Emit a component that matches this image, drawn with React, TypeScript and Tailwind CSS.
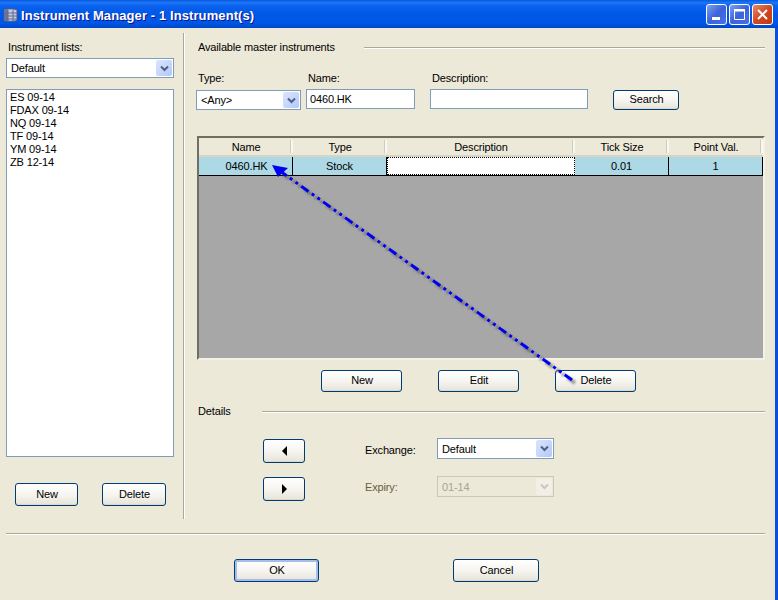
import type { ReactNode } from "react";

const instruments = ["ES 09-14", "FDAX 09-14", "NQ 09-14", "TF 09-14", "YM 09-14", "ZB 12-14"];

function Btn({ className, children, primary }: { className: string; children: ReactNode; primary?: boolean }) {
  return (
    <div
      className={`flex items-center justify-center rounded-[3px] border border-[#003c74] bg-gradient-to-b from-white via-[#f6f5f0] to-[#e6e3d8] pb-px pl-px text-[11px] tracking-[-0.15px] text-black ${
        primary ? "shadow-[inset_0_0_0_2px_#a4bdec]" : "shadow-[inset_0_-1px_0_#dcd7cb]"
      } ${className}`}
    >
      {children}
    </div>
  );
}

function Chevron({ color }: { color: string }) {
  return (
    <svg width="9" height="7" viewBox="0 0 9 7">
      <path d="M1 1.5 L4.5 5 L8 1.5" fill="none" stroke={color} strokeWidth="2" />
    </svg>
  );
}

function Select({ className, value, disabled }: { className: string; value: string; disabled?: boolean }) {
  return (
    <div
      className={`flex items-center justify-between border p-px ${
        disabled ? "border-[#c9c7ba] bg-[#ece9d8] text-[#a7a595]" : "border-[#7f9db9] bg-white text-black"
      } ${className}`}
    >
      <span className="pl-[3px] pt-px">{value}</span>
      <div
        className={`flex h-full w-[16px] items-center justify-center rounded-[2px] ${
          disabled ? "bg-[#f1efe6]" : "bg-gradient-to-br from-[#dbe5fd] to-[#b4c8f8]"
        }`}
      >
        <Chevron color={disabled ? "#c9c7ba" : "#4d6185"} />
      </div>
    </div>
  );
}

function Etched({ className }: { className: string }) {
  return <div className={`h-[2px] border-t border-b border-t-[#aca899] border-b-white ${className}`} />;
}

function WinBtn({ className, children }: { className: string; children: ReactNode }) {
  return (
    <div className={`flex h-[21px] w-[21px] items-center justify-center rounded-[3px] border border-white ${className}`}>
      <svg width="15" height="15" viewBox="0 0 15 15">
        {children}
      </svg>
    </div>
  );
}

const headers = [
  { label: "Name", w: "w-[94px]" },
  { label: "Type", w: "w-[94px]" },
  { label: "Description", w: "w-[188px]" },
  { label: "Tick Size", w: "w-[94px]" },
  { label: "Point Val.", w: "w-[94px]" },
];

function Grid() {
  return (
    <div className="ml-px mt-[26px] flex h-[224px] w-[568px] flex-col border-2 border-t-[#716f64] border-l-[#716f64] border-r-[#f4f2e8] border-b-[#f4f2e8] bg-[#a7a7a7]">
      <div className="flex h-[19px] border-b-2 border-[#d8d4c5] bg-[#ece9d8]">
        {headers.map((h) => (
          <div key={h.label} className={`${h.w} flex items-center justify-center`}>
            <span className="flex-1 pl-[2px] pt-px text-center">{h.label}</span>
            <span className="h-[13px] w-[2px] bg-[#f8f7f1] shadow-[-1px_0_0_#cfcbbb]" />
          </div>
        ))}
      </div>
      <div className="flex h-[19px] border-b border-black bg-[#add8e6] text-black">
        <div className="flex w-[94px] items-center justify-center border-r border-black pl-[2px]">0460.HK</div>
        <div className="flex w-[94px] items-center justify-center border-r border-black">Stock</div>
        <div className="w-[188px] border border-dotted border-black bg-white" />
        <div className="flex w-[94px] items-center justify-center border-r border-black">0.01</div>
        <div className="flex w-[94px] items-center justify-center border-r border-black">1</div>
      </div>
    </div>
  );
}

export default function App() {
  return (
    <div className="relative h-[600px] w-[778px] overflow-hidden bg-[#0a50dc] font-['Liberation_Sans',sans-serif]">
      {/* title bar */}
      <div className="flex h-[28px] items-start bg-[linear-gradient(180deg,#0a58e0_0%,#1a78f6_10%,#0c62ee_20%,#0058e8_50%,#0056e4_85%,#0044c4_100%)] pl-[3px] pr-[5px] pt-[4px]">
        <svg width="15" height="16" viewBox="0 0 15 16" className="mt-[3px]">
          <path d="M1 3 C1 1.5 14 1.5 14 3 V13 C14 14.8 1 14.8 1 13 Z" fill="#c6cbe0" stroke="#4c5680" strokeWidth="1" />
          <path d="M1 3 C1 1.5 5 1.5 5 3 V14 C3 14.3 1 14 1 13 Z" fill="#6c7699" />
          <path d="M5 3 V14 M10 3 V14 M1 6 H14 M1 9 H14 M1 12 H14" stroke="#5d6a90" strokeWidth="1" fill="none" />
        </svg>
        <span className="ml-[3px] mt-[4px] flex-1 text-[13px] font-bold leading-[15px] tracking-[0.1px] text-white [text-shadow:1px_1px_0_#0f1089]">
          Instrument Manager - 1 Instrument(s)
        </span>
        <div className="flex gap-[2px]">
          <WinBtn className="bg-gradient-to-br from-[#7f9ff0] via-[#3b62dc] to-[#4a70e4]">
            <rect x="3" y="10" width="8" height="3" fill="white" />
          </WinBtn>
          <WinBtn className="bg-gradient-to-br from-[#7f9ff0] via-[#3b62dc] to-[#4a70e4]">
            <path d="M2.5 2.5 V12.5 H12.5 V2.5" fill="none" stroke="white" strokeWidth="1" />
            <rect x="2" y="2" width="11" height="2.5" fill="white" />
          </WinBtn>
          <WinBtn className="bg-gradient-to-br from-[#e8876a] via-[#d0481e] to-[#c03a12]">
            <path d="M3 3 L12 12 M12 3 L3 12" stroke="white" strokeWidth="2" />
          </WinBtn>
        </div>
      </div>

      {/* dialog body */}
      <div className="h-[572px] w-[775px] bg-[#ece9d8] pt-[5px] text-[11px] tracking-[-0.15px] text-black">
        <div className="flex h-[486px]">
          {/* left pane */}
          <div className="flex w-[183px] flex-col pl-[6px] pr-[9px]">
            <div className="mt-[7px] h-[14px] pl-[2px] leading-[14px]">Instrument lists:</div>
            <Select className="mt-[4px] h-[20px] w-[168px]" value="Default" />
            <div className="mt-[11px] flex h-[368px] w-[168px] flex-col border border-[#7f9db9] bg-white px-[3px] py-px leading-[13px]">
              {instruments.map((name) => (
                <div key={name}>{name}</div>
              ))}
            </div>
            <div className="mt-[26px] flex pl-[9px]">
              <Btn className="h-[23px] w-[63px]">New</Btn>
              <Btn className="ml-[24px] h-[23px] w-[64px]">Delete</Btn>
            </div>
          </div>
          <div className="h-full w-[2px] border-l border-r border-l-[#aca899] border-r-white" />

          {/* right pane */}
          <div className="flex w-[580px] flex-col pl-[11px]">
            <div className="mt-[7px] flex h-[14px] items-center">
              <span className="ml-[2px] w-[166px] leading-[14px]">Available master instruments</span>
              <Etched className="mt-[2px] w-[401px]" />
            </div>
            <div className="mt-[17px] flex items-start">
              <div className="flex w-[105px] flex-col">
                <span className="h-[14px] pl-[2px] leading-[14px]">Type:</span>
                <Select className="mt-[5px] h-[20px] w-[105px]" value="<Any>" />
              </div>
              <div className="ml-[5px] flex w-[109px] flex-col">
                <span className="h-[14px] pl-[2px] leading-[14px]">Name:</span>
                <div className="mt-[4px] flex h-[20px] items-center border border-[#7f9db9] bg-white pl-[3px] pt-px">0460.HK</div>
              </div>
              <div className="ml-[15px] flex w-[158px] flex-col">
                <span className="h-[14px] pl-[2px] leading-[14px]">Description:</span>
                <div className="mt-[4px] h-[20px] border border-[#7f9db9] bg-white" />
              </div>
              <Btn className="ml-[25px] mt-[19px] h-[20px] w-[66px]">Search</Btn>
            </div>
            <Grid />
            <div className="mt-[10px] flex pl-[125px]">
              <Btn className="h-[22px] w-[81px]">New</Btn>
              <Btn className="ml-[36px] h-[22px] w-[81px]">Edit</Btn>
              <Btn className="ml-[36px] h-[22px] w-[81px]">Delete</Btn>
            </div>
            <div className="mt-[12px] flex h-[14px] items-center">
              <span className="ml-[2px] w-[64px] leading-[14px]">Details</span>
              <Etched className="mt-[2px] w-[503px]" />
            </div>
            <div className="mt-[20px] flex items-start">
              <Btn className="ml-[67px] mt-px h-[24px] w-[42px]">
                <svg width="7" height="10" viewBox="0 0 7 10">
                  <path d="M6 0 V10 L1 5 Z" fill="black" />
                </svg>
              </Btn>
              <span className="ml-[60px] mt-[5px] w-[72px] leading-[14px]">Exchange:</span>
              <Select className="h-[21px] w-[117px]" value="Default" />
            </div>
            <div className="mt-[13px] flex items-start">
              <Btn className="ml-[67px] mt-px h-[24px] w-[42px]">
                <svg width="7" height="10" viewBox="0 0 7 10">
                  <path d="M1 0 V10 L6 5 Z" fill="black" />
                </svg>
              </Btn>
              <span className="ml-[60px] mt-[4px] w-[72px] leading-[14px] text-[#65603f]">Expiry:</span>
              <Select className="h-[21px] w-[117px]" value="01-14" disabled />
            </div>
          </div>
        </div>

        <Etched className="ml-[6px] mt-[14px] w-[759px]" />
        <div className="mt-[24px] flex pl-[234px]">
          <Btn primary className="h-[23px] w-[85px]">OK</Btn>
          <Btn className="ml-[134px] h-[23px] w-[86px]">Cancel</Btn>
        </div>
      </div>

      {/* annotation arrow drawn over the dialog */}
      <svg className="pointer-events-none absolute left-0 top-0" width="778" height="600" viewBox="0 0 778 600">
        <defs>
          <filter id="arrow-shadow" x="-5%" y="-5%" width="110%" height="110%">
            <feGaussianBlur stdDeviation="1.2" />
          </filter>
        </defs>
        <path d="M575 383 L283 174" stroke="#55555f" strokeOpacity="0.6" strokeWidth="3.5" strokeDasharray="9 4 3 4 3 4" filter="url(#arrow-shadow)" fill="none" />
        <path d="M572 380 L280 171" stroke="#0000f0" strokeWidth="3" strokeDasharray="9 4 3 4 3 4" fill="none" />
        <path d="M272 165 L288 168 L278 177 Z" fill="#0000f0" />
      </svg>
    </div>
  );
}
